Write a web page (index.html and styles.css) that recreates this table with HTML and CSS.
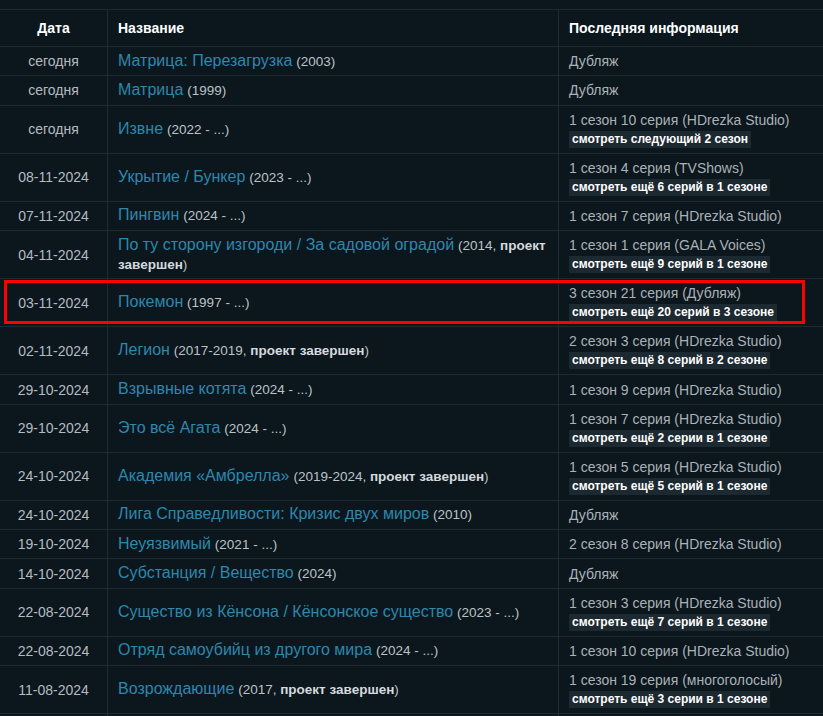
FILE: index.html
```html
<!DOCTYPE html>
<html lang="ru">
<head>
<meta charset="utf-8">
<link rel="stylesheet" href="styles.css">
</head>
<body>
<div class="wrap">
<table class="updates">
<thead>
<tr><th class="c-date">Дата</th><th class="c-title">Название</th><th class="c-info">Последняя информация</th></tr>
</thead>
<tbody>
<tr><td class="date">сегодня</td><td class="title"><a href="#">Матрица: Перезагрузка</a> <span class="year">(2003)</span></td><td class="info">Дубляж</td></tr>
<tr><td class="date">сегодня</td><td class="title"><a href="#">Матрица</a> <span class="year">(1999)</span></td><td class="info">Дубляж</td></tr>
<tr class="two"><td class="date">сегодня</td><td class="title"><a href="#">Извне</a> <span class="year">(2022 - ...)</span></td><td class="info">1 сезон 10 серия (HDrezka Studio)<div><span class="badge">смотреть следующий 2 сезон</span></div></td></tr>
<tr class="two"><td class="date">08-11-2024</td><td class="title"><a href="#">Укрытие / Бункер</a> <span class="year">(2023 - ...)</span></td><td class="info">1 сезон 4 серия (TVShows)<div><span class="badge">смотреть ещё 6 серий в 1 сезоне</span></div></td></tr>
<tr><td class="date">07-11-2024</td><td class="title"><a href="#">Пингвин</a> <span class="year">(2024 - ...)</span></td><td class="info">1 сезон 7 серия (HDrezka Studio)</td></tr>
<tr class="two"><td class="date">04-11-2024</td><td class="title"><a href="#">По ту сторону изгороди / За садовой оградой</a> <span class="year">(2014, <b>проект завершен</b>)</span></td><td class="info">1 сезон 1 серия (GALA Voices)<div><span class="badge">смотреть ещё 9 серий в 1 сезоне</span></div></td></tr>
<tr class="two"><td class="date">03-11-2024</td><td class="title"><a href="#">Покемон</a> <span class="year">(1997 - ...)</span></td><td class="info">3 сезон 21 серия (Дубляж)<div><span class="badge">смотреть ещё 20 серий в 3 сезоне</span></div></td></tr>
<tr class="two"><td class="date">02-11-2024</td><td class="title"><a href="#">Легион</a> <span class="year">(2017-2019, <b>проект завершен</b>)</span></td><td class="info">2 сезон 3 серия (HDrezka Studio)<div><span class="badge">смотреть ещё 8 серий в 2 сезоне</span></div></td></tr>
<tr><td class="date">29-10-2024</td><td class="title"><a href="#">Взрывные котята</a> <span class="year">(2024 - ...)</span></td><td class="info">1 сезон 9 серия (HDrezka Studio)</td></tr>
<tr class="two"><td class="date">29-10-2024</td><td class="title"><a href="#">Это всё Агата</a> <span class="year">(2024 - ...)</span></td><td class="info">1 сезон 7 серия (HDrezka Studio)<div><span class="badge">смотреть ещё 2 серии в 1 сезоне</span></div></td></tr>
<tr class="two"><td class="date">24-10-2024</td><td class="title"><a href="#">Академия «Амбрелла»</a> <span class="year">(2019-2024, <b>проект завершен</b>)</span></td><td class="info">1 сезон 5 серия (HDrezka Studio)<div><span class="badge">смотреть ещё 5 серий в 1 сезоне</span></div></td></tr>
<tr><td class="date">24-10-2024</td><td class="title"><a href="#">Лига Справедливости: Кризис двух миров</a> <span class="year">(2010)</span></td><td class="info">Дубляж</td></tr>
<tr><td class="date">19-10-2024</td><td class="title"><a href="#">Неуязвимый</a> <span class="year">(2021 - ...)</span></td><td class="info">2 сезон 8 серия (HDrezka Studio)</td></tr>
<tr><td class="date">14-10-2024</td><td class="title"><a href="#">Субстанция / Вещество</a> <span class="year">(2024)</span></td><td class="info">Дубляж</td></tr>
<tr class="two"><td class="date">22-08-2024</td><td class="title"><a href="#">Существо из Кёнсона / Кёнсонское существо</a> <span class="year">(2023 - ...)</span></td><td class="info">1 сезон 3 серия (HDrezka Studio)<div><span class="badge">смотреть ещё 7 серий в 1 сезоне</span></div></td></tr>
<tr><td class="date">22-08-2024</td><td class="title"><a href="#">Отряд самоубийц из другого мира</a> <span class="year">(2024 - ...)</span></td><td class="info">1 сезон 10 серия (HDrezka Studio)</td></tr>
<tr class="two"><td class="date">11-08-2024</td><td class="title"><a href="#">Возрождающие</a> <span class="year">(2017, <b>проект завершен</b>)</span></td><td class="info">1 сезон 19 серия (многоголосый)<div><span class="badge">смотреть ещё 3 серии в 1 сезоне</span></div></td></tr>
<tr><td class="date">&nbsp;</td><td class="title">&nbsp;</td><td class="info">&nbsp;</td></tr>
</tbody>
</table>
<div class="highlight"></div>
</div>
</body>
</html>
```

FILE: styles.css
```css
html, body {
  margin: 0;
  padding: 0;
  background: #0b161d;
  overflow: hidden;
}
body {
  font-family: "Liberation Sans", Arial, sans-serif;
  font-size: 14px;
  color: #b4bcc1;
}
.wrap {
  position: relative;
  padding-top: 9px;
}
.updates {
  border-collapse: collapse;
  width: 840px;
  table-layout: fixed;
}
.updates th, .updates td {
  border-top: 1px solid #1f2b33;
  border-left: 1px solid #1f2b33;
  vertical-align: middle;
  box-sizing: border-box;
}
.updates tr > :first-child {
  border-left: none;
}
.updates thead tr { height: 37px; }
.updates tbody tr { height: 29.3px; }
.updates tbody tr.two { height: 48.1px; }
.c-date { width: 107.5px; }
.c-title { width: 451px; }
.updates th {
  color: #ffffff;
  font-weight: bold;
  font-size: 14px;
  padding: 0 10px 1px;
  text-align: left;
}
.updates th.c-date {
  text-align: center;
  padding: 0 0 1px;
}
.updates td {
  padding: 0 10px;
  line-height: 18px;
}
.updates td.title {
  line-height: 19px;
}
.updates td.date {
  text-align: center;
  padding: 0;
  color: #b4bcc1;
  font-size: 14px;
}
.title a {
  color: #2d88ad;
  text-decoration: none;
  font-size: 16px;
  line-height: 14px;
}
.year {
  font-size: 13.5px;
  line-height: 14px;
  color: #bcc3c7;
}
.year b {
  color: #d5dade;
}
.info {
  color: #aab2b7;
  font-size: 14px;
}
.info div {
  line-height: 19px;
  height: 19px;
}
.badge {
  display: inline-block;
  background: #1d2930;
  color: #ffffff;
  font-weight: bold;
  font-size: 12px;
  line-height: 17px;
  padding: 0 3px;
}
.highlight {
  position: absolute;
  left: 4px;
  top: 280px;
  width: 795px;
  height: 38px;
  border: 3px solid #ff0000;
}
```
